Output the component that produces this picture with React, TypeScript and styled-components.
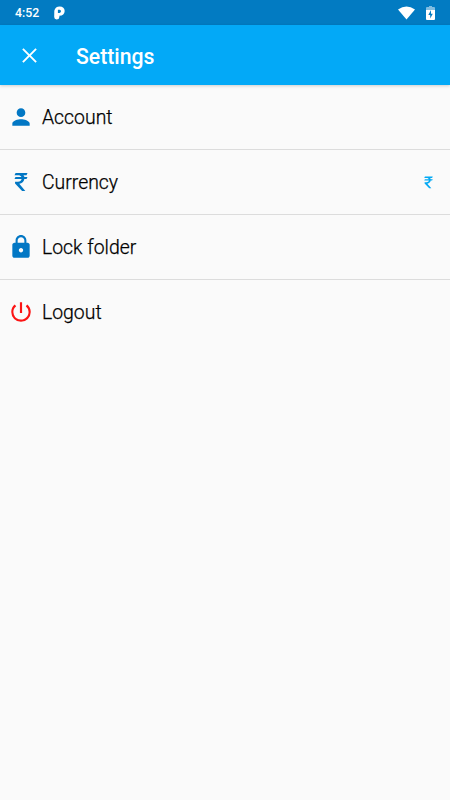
import React from 'react';
import styled, { createGlobalStyle } from 'styled-components';

const GlobalStyle = createGlobalStyle`
  * { box-sizing: border-box; }
  body { margin: 0; background: #fafafa; font-family: Roboto, sans-serif; }
`;

const Screen = styled.div`
  display: flex;
  flex-direction: column;
  width: 450px;
  height: 800px;
  background: #fafafa;
`;

const StatusBar = styled.div`
  display: flex;
  align-items: center;
  height: 25px;
  padding: 1px 15px 0 15px;
  background: #027bc2;
  color: #fff;
`;

const Clock = styled.span`
  width: 39px;
  font-size: 12.3px;
  font-weight: 500;
  line-height: 14px;
`;

const StatusIcons = styled.div`
  display: flex;
  align-items: center;
  gap: 11px;
  margin-left: auto;
`;

const Header = styled.header`
  display: flex;
  align-items: center;
  gap: 34px;
  height: 60px;
  padding: 2px 18px 0 17px;
  background: #03a9f7;
  color: #fff;
  box-shadow: 0 1px 3px rgba(0, 0, 0, 0.18);
`;

const Title = styled.h1`
  margin: 0;
  padding-top: 1px;
  font-size: 21.2px;
  font-weight: 500;
  line-height: 26px;
`;

const IconButton = styled.button`
  display: flex;
  padding: 0;
  margin-top: -2px;
  border: 0;
  background: none;
  color: inherit;
`;

const Row = styled.div<{ $last?: boolean }>`
  display: flex;
  align-items: center;
  height: 65px;
  padding: 0 13px 0 8px;
  border-bottom: 1px solid ${(p) => (p.$last ? 'transparent' : '#dcdcdc')};
`;

const Label = styled.span`
  flex: 1;
  margin-left: 8px;
  padding-top: 2px;
  font-size: 19.4px;
  font-weight: 300;
  line-height: 24px;
  color: #000;
  -webkit-text-stroke: 0.25px #000;
`;

const Glyph = styled.svg<{ $color?: string }>`
  display: block;
  flex: none;
  fill: ${(p) => p.$color ?? 'currentColor'};
`;

const PERSON = 'M12 12c2.21 0 4-1.79 4-4s-1.79-4-4-4-4 1.79-4 4 1.79 4 4 4zm0 2c-2.67 0-8 1.34-8 4v2h16v-2c0-2.66-5.33-4-8-4z';
const RUPEE = 'M7 3.7H18L17.1 5.7H14.2C14.7 6.2 15 6.8 15.1 7.3H18L17.1 9.3H15.1C14.8 11.7 12.9 13.3 10.4 13.7L16 20.2H13L6.5 13.3V11.7H9.2C11 11.7 12.3 10.8 12.6 9.3H6L6.9 7.3H12.4C11.9 6.3 10.8 5.7 9.2 5.7H6z';
const LOCK = 'M18 8h-1V6c0-2.76-2.24-5-5-5S7 3.24 7 6v2H6c-1.1 0-2 .9-2 2v10c0 1.1.9 2 2 2h12c1.1 0 2-.9 2-2V10c0-1.1-.9-2-2-2zm-6 9c-1.1 0-2-.9-2-2s.9-2 2-2 2 .9 2 2-.9 2-2 2zm3.1-9H8.9V6c0-1.71 1.39-3.1 3.1-3.1s3.1 1.39 3.1 3.1z';
const POWER = 'M13 3h-2v10h2zm4.83 2.17-1.42 1.42A6.92 6.92 0 0 1 19 12c0 3.87-3.13 7-7 7A6.995 6.995 0 0 1 7.58 6.58L6.17 5.17A8.932 8.932 0 0 0 3 12a9 9 0 0 0 18 0c0-2.74-1.23-5.18-3.17-6.83z';
const CLOSE = 'M19 6.3 17.7 5 12 10.7 6.3 5 5 6.3 10.7 12 5 17.7 6.3 19 12 13.3 17.7 19 19 17.7 13.3 12z';

const items = [
  { label: 'Account', path: PERSON, color: '#0277c4' },
  { label: 'Currency', path: RUPEE, color: '#0277c4', value: true },
  { label: 'Lock folder', path: LOCK, color: '#0277c4' },
  { label: 'Logout', path: POWER, color: '#fc1414' },
];

export default function App() {
  return (
    <Screen>
      <GlobalStyle />
      <StatusBar>
        <Clock>4:52</Clock>
        <Glyph width="12" height="14" viewBox="0 0 12 14">
          <path fillRule="evenodd" d="M.3 4.8Q1.3.5 5.7.5Q10.4.7 10.7 5Q10.4 9.6 5.4 9.8V11Q5.2 13.5 2.6 13.5Q.2 13.3.2 11zM3.9 3.8V6.9H5.6Q7 6.7 7 5.3T5.6 3.8z" />
        </Glyph>
        <StatusIcons>
          <Glyph width="17" height="14" viewBox="0 0 17 14"><path d="M0 3.5Q8.5-2.5 17 3.5L8.5 13.5z" /></Glyph>
          <Glyph width="9" height="14" viewBox="0 0 9 14">
            <path opacity=".5" d="M3 1V0h3v1h2q1 0 1 1v2H0V2q0-1 1-1z" />
            <path fillRule="evenodd" d="M0 4h9v9q0 1-1 1H1q-1 0-1-1zM5 4L2.3 9h1.9v3.5L6.8 7.8H5z" />
          </Glyph>
        </StatusIcons>
      </StatusBar>
      <Header>
        <IconButton aria-label="Close">
          <Glyph width="25" height="25" viewBox="0 0 24 24"><path d={CLOSE} /></Glyph>
        </IconButton>
        <Title>Settings</Title>
      </Header>
      {items.map((item, i) => (
        <Row key={item.label} $last={i === items.length - 1}>
          <Glyph $color={item.color} width="26" height="26" viewBox="0 0 24 24"><path d={item.path} /></Glyph>
          <Label>{item.label}</Label>
          {item.value && <Glyph $color="#03a9f4" width="17" height="17" viewBox="0 0 24 24"><path d={RUPEE} /></Glyph>}
        </Row>
      ))}
    </Screen>
  );
}
